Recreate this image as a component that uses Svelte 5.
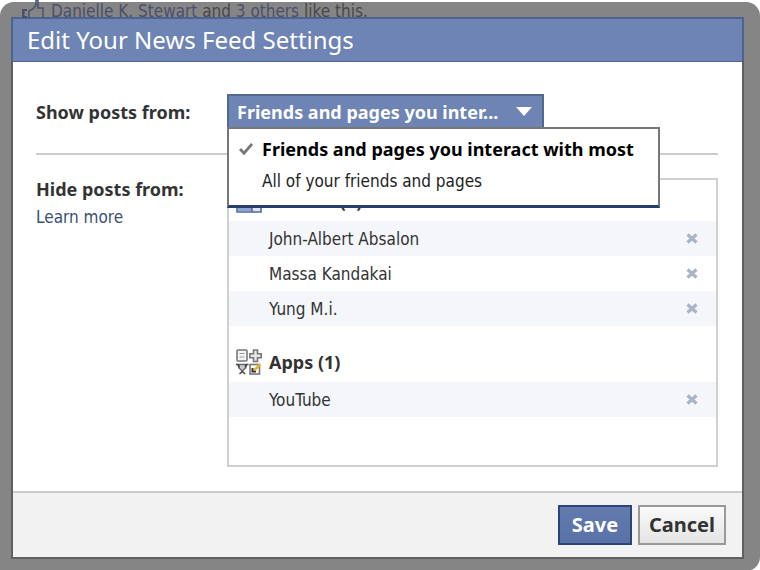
<script>
  let selected = $state(0);
  let open = $state(true);
  const options = ['Friends and pages you interact with most', 'All of your friends and pages'];
  const maxLength = 27;
  const current = $derived(
    options[selected].length > maxLength + 3 ? options[selected].slice(0, maxLength) + '...' : options[selected]
  );
  let groups = $state([
    { name: 'Friends', icon: 'friends', items: ['John-Albert Absalon', 'Massa Kandakai', 'Yung M.i.'] },
    { name: 'Apps', icon: 'apps', items: ['YouTube'] }
  ]);
  function choose(i) {
    selected = i;
    open = false;
  }
  function remove(group, i) {
    group.items.splice(i, 1);
  }
</script>

<div class="page">
  <div class="story">
    <svg class="thumb" width="24" height="18" viewBox="0 0 24 18" aria-hidden="true">
      <path d="M1 9h5v2H3.500v5H6v2H1z" fill="#4a506b" />
      <path d="M8 18V11l4-2 3-4V0h2v8h5v10" fill="none" stroke="#4a506b" stroke-width="1.500" />
    </svg>
    <span><span class="who">Danielle K. Stewart</span> and <span class="who">3 others</span> like this.</span>
  </div>

  <div class="dialog" role="dialog" aria-labelledby="title">
    <h1 id="title">Edit Your News Feed Settings</h1>

    <div class="body">
      <div class="row show">
        <span class="label" id="show-label">Show posts from:</span>
        <div class="picker">
          <button class="toggle" aria-haspopup="listbox" aria-expanded={open} aria-labelledby="show-label" onclick={() => (open = !open)}>
            <span class="current">{current}</span>
            <svg width="16" height="9" viewBox="0 0 16 9" aria-hidden="true"><path d="M0 0h16L8 9z" fill="#fff" /></svg>
          </button>
          {#if open}
            <div class="menu" role="listbox" aria-labelledby="show-label">
              {#each options as option, i}
                <button class="option" class:on={i === selected} role="option" aria-selected={i === selected} onclick={() => choose(i)}>
                  <span class="tick">
                    {#if i === selected}
                      <svg width="14" height="12" viewBox="0 0 14 12" aria-hidden="true">
                        <path d="M1 6l4 4.200L13 1" fill="none" stroke="#777" stroke-width="2.800" />
                      </svg>
                    {/if}
                  </span>{option}
                </button>
              {/each}
            </div>
          {/if}
        </div>
      </div>

      <div class="row hide">
        <div class="side">
          <span class="label">Hide posts from:</span>
          <a href="#learn">Learn more</a>
        </div>
        <div class="list">
          {#each groups as group}
            <section>
              <h2>
                {#if group.icon === 'apps'}
                  <svg width="26" height="26" viewBox="0 0 26 26" aria-hidden="true">
                    <rect x="1" y="1" width="10" height="11" rx="1" fill="#f4f4f4" stroke="#777" stroke-width="1.600" />
                    <path d="M3.500 4.500h5M3.500 8h5" stroke="#999" stroke-width="1.200" />
                    <path d="M17.500 1h4v3.800h3.700v4h-3.700v3.700h-4V8.800h-3.700v-4h3.700z" fill="#e6e6e6" stroke="#777" stroke-width="1.600" />
                    <path d="M3 15.500h6.500v3.500L6.300 22 3 19z" fill="#ccc" stroke="#666" stroke-width="1.500" />
                    <path d="M0 15.500h2l1 3M12.500 15.500h-2l-1 3M3.500 25l2.800-2.500L9 25" fill="none" stroke="#444" stroke-width="1.600" />
                    <rect x="14" y="15.500" width="9.500" height="9.500" fill="#fff" stroke="#777" stroke-width="1.600" />
                    <path d="M16.500 19v3.500h3.500" fill="none" stroke="#333" stroke-width="2" />
                    <path d="M18.500 21l5.500-5.500" stroke="#e0b52c" stroke-width="2.600" />
                  </svg>
                {:else}
                  <svg width="26" height="26" viewBox="0 0 26 26" aria-hidden="true">
                    <path d="M1 1h24v23H1z" fill="#dfe5f3" stroke="#5268a0" stroke-width="1.600" />
                    <path d="M2 18h14v5H2z" fill="#92a3d6" />
                    <path d="M16 17v7" stroke="#5268a0" stroke-width="1.600" />
                  </svg>
                {/if}
                {group.name} ({group.items.length})
              </h2>
              <ul>
                {#each group.items as item, i}
                  <li>
                    {item}
                    <button class="remove" aria-label="Remove {item}" onclick={() => remove(group, i)}>
                      <svg width="12" height="11" viewBox="0 0 12 11" aria-hidden="true">
                        <path d="M1.500 1.500l9 8M10.500 1.500l-9 8" stroke="#a9b4c6" stroke-width="3.200" />
                      </svg>
                    </button>
                  </li>
                {/each}
              </ul>
            </section>
          {/each}
        </div>
      </div>
    </div>

    <div class="footer">
      <button class="action save">Save</button>
      <button class="action">Cancel</button>
    </div>
  </div>
</div>

<style>
  :global(body) {
    background: #fff;
    padding-top: 2px;
  }
  .page {
    box-sizing: border-box;
    min-height: calc(100vh - 2px);
    padding: 0 16px 12px 11px;
    border-radius: 14px 14px 14px 0;
    background: #858585;
    font-family: 'DejaVu Sans Condensed', 'DejaVu Sans', sans-serif;
    font-stretch: condensed;
    font-size: 17px;
    color: #333;
  }
  button {
    font: inherit;
    cursor: pointer;
  }
  h1,
  h2,
  .label,
  .toggle,
  .option.on,
  .action {
    font-family: 'Noto Sans', sans-serif;
    font-size: 18px;
    font-stretch: normal;
    font-weight: 700;
  }
  .story {
    display: flex;
    height: 15px;
    gap: 6px;
    padding-left: 10px;
    line-height: 18px;
    color: #484848;
  }
  .thumb {
    flex: none;
    margin-top: -2px;
  }
  .who {
    color: #4a506b;
  }
  .dialog {
    border: 2px solid #606060;
    background: #fff;
  }
  h1 {
    margin: -2px -2px 0;
    padding: 0 16px 0 14px;
    border: 2px solid #4f6294;
    border-bottom-width: 1px;
    background: #6d84b4;
    color: #fff;
    font-size: 24px;
    font-weight: 400;
    line-height: 42px;
  }
  .body {
    padding: 32px 24px 24px 23px;
  }
  .row {
    display: grid;
    grid-template-columns: 191px 1fr;
  }
  .show {
    padding-bottom: 23px;
    border-bottom: 2px solid #ccc;
  }
  .hide {
    padding-top: 23px;
  }
  .label {
    line-height: 36px;
  }
  .side {
    display: flex;
    flex-direction: column;
    align-items: flex-start;
  }
  .side .label {
    line-height: 22px;
  }
  a {
    color: #3b5070;
    line-height: 34px;
    text-decoration: none;
  }
  .picker {
    position: relative;
  }
  .toggle {
    box-sizing: border-box;
    display: flex;
    align-items: center;
    justify-content: space-between;
    width: 317px;
    height: 35px;
    padding: 0 10px 2px 8px;
    border: 2px solid #55678f;
    border-bottom: 0;
    background: #6d84b4;
    color: #fff;
    text-align: left;
  }
  .toggle svg {
    flex: none;
  }
  .current {
    white-space: nowrap;
  }
  .menu {
    position: absolute;
    z-index: 1;
    top: 33px;
    left: 0;
    box-sizing: border-box;
    width: 433px;
    padding: 4px 0 8px;
    border: 2px solid #777;
    border-bottom: 3px solid #293e6a;
    background: #fff;
  }
  .option {
    display: flex;
    align-items: center;
    width: 100%;
    height: 32px;
    padding: 0 0 0 10px;
    border: 0;
    background: none;
    color: #222;
    text-align: left;
    white-space: nowrap;
  }
  .option.on {
    color: #000;
  }
  .tick {
    display: flex;
    flex: none;
    width: 23px;
  }
  .list {
    box-sizing: border-box;
    min-height: 289px;
    border: 2px solid #d0d0d0;
  }
  section + section {
    padding-top: 15px;
  }
  h2 {
    display: flex;
    align-items: center;
    gap: 7px;
    height: 41px;
    margin: 0;
    padding-left: 7px;
  }
  ul {
    margin: 0;
    padding: 0;
    list-style: none;
  }
  li {
    display: flex;
    align-items: center;
    justify-content: space-between;
    height: 35px;
    padding: 0 18px 0 40px;
  }
  li:nth-child(odd) {
    background: #f4f6fa;
  }
  .remove {
    display: flex;
    padding: 0;
    border: 0;
    background: none;
  }
  .footer {
    display: flex;
    justify-content: flex-end;
    gap: 6px;
    padding: 12px 16px;
    border-top: 2px solid #ccc;
    background: #f2f2f2;
  }
  .action {
    box-sizing: border-box;
    min-width: 74px;
    height: 40px;
    padding: 0 9px 2px;
    border: 2px solid #999;
    background: linear-gradient(#fafafa, #e4e4e4);
    color: #333;
    font-size: 20px;
  }
  .save {
    border-color: #2d447a;
    background: linear-gradient(#637bad, #5872a8);
    color: #fff;
  }
</style>
